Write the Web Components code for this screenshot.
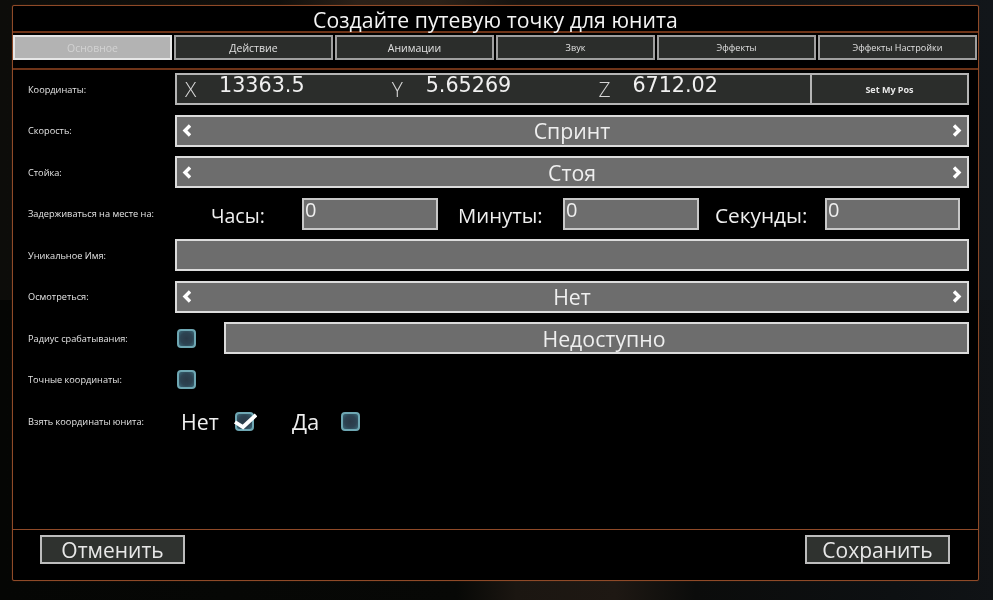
<!DOCTYPE html>
<html lang="ru"><head><meta charset="utf-8"><title>Путевая точка</title>
<style>
html,body{margin:0;height:100%}
body{width:993px;height:600px;overflow:hidden;box-sizing:border-box;padding:5px 14px 19px 12px;background:linear-gradient(90deg,#0d0d0a 0,#0f0e0b 28%,#2a2018 36%,#2b2118 44%,#14120f 52%,#101213 80%,#12161a 100%) top/100% 50% no-repeat,linear-gradient(90deg,#050604 0,#070806 46%,#1b1611 52%,#1e1813 62%,#0b0c0b 70%,#0d1012 90%,#101316 100%) bottom/100% 50% no-repeat;color:#fff;font-family:"Open Sans","Noto Sans",sans-serif}
wp-dialog{filter:blur(.3px)}
</style></head><body>
<template id="t-dialog"><style>
:host{display:flex;flex-direction:column;height:100%;box-sizing:border-box;background:#000;border:1px solid #8f4a28;box-shadow:0 0 1px #7d3c1c;border-radius:2px}
header{height:24px;padding-top:1px;flex:none;display:flex;align-items:center;justify-content:center;font-size:21.2px;letter-spacing:.06px;color:#f4f4f4;border-bottom:2px solid #6f3418}
nav{height:37px;flex:none;box-sizing:border-box;display:grid;grid-template-columns:repeat(6,159px);gap:2px;padding:2px 0 0 0;border-bottom:2px solid #6f3418;align-content:start}
main{flex:1;min-height:0;display:flex;flex-direction:column;gap:9.5px;padding:3px 9px 0 15px}
footer{height:51px;flex:none;box-sizing:border-box;border-top:1px solid #8f4a28;display:flex;justify-content:space-between;padding:5px 28px 0 27px}
</style><header><slot name="title"></slot></header><nav><slot name="tabs"></slot></nav><main><slot></slot></main><footer><slot name="footer"></slot></footer></template>

<template id="t-tab"><style>
:host{display:flex;align-items:center;justify-content:center;height:25px;box-sizing:border-box;border:2px solid #9f9f9f;background:#2b2d2b;color:#e0e0e0;font-size:10.5px}
:host([active]){background:#b3b3b3;border-color:#e6e6e6;color:#d2d2d2}
:host([small]){font-size:9.1px}
</style><slot></slot></template>

<template id="t-row"><style>
:host{display:grid;grid-template-columns:147px 1fr;align-items:center;height:32px}
.l{font-size:9.2px;color:#e4e4e4}
.c{display:flex;align-items:center;height:100%;min-width:0}
</style><div class="l"><slot name="label"></slot></div><div class="c"><slot></slot></div></template>

<template id="t-coords"><style>
:host{display:flex;flex:1;height:32px;box-sizing:border-box;border:2px solid #b5b5b5;background:#2b2d2b}
.v{flex:1;display:flex;position:relative}
button{all:unset;box-sizing:border-box;width:157px;border-left:2px solid #b5b5b5;display:flex;align-items:center;justify-content:center;font:700 9px "Open Sans",sans-serif;color:#e8e8e8}
</style><div class="v"><slot></slot></div><button>Set My Pos</button></template>

<template id="t-axis"><style>
:host{display:block;width:206.7px;box-sizing:border-box;padding-left:8px}
.w{display:flex;align-items:flex-start}
.a{font-size:21px;font-weight:300;color:#d6d6d6;width:34px;line-height:24px;margin-top:2px}
.n{font:20.7px/20px "DejaVu Sans",sans-serif;color:#f0f0f0;margin-top:0}
</style><div class="w"><span class="a"><slot name="axis"></slot></span><span class="n"><slot></slot></span></div></template>

<template id="t-select"><style>
:host{display:flex;flex:1;align-items:center;justify-content:space-between;height:32px;box-sizing:border-box;border:2px solid #dcdcdc;background:#6d6d6d;padding:0 5px 0 5px;font-size:21.3px;color:#efefef}
svg{width:9px;height:13px;flex:none}
path{fill:none;stroke:#fff;stroke-width:3.4}
span{flex:1;text-align:center}
</style><svg viewBox="0 0 9 13"><path d="M8 1.500 3 6.500l5 5"/></svg><span><slot></slot></span><svg viewBox="0 0 9 13"><path d="M1 1.500 6 6.500l-5 5"/></svg></template>

<template id="t-field"><style>
:host{display:flex;flex:1;align-items:center;justify-content:center;height:32px;box-sizing:border-box;border:2px solid #dcdcdc;background:#6d6d6d;font-size:21.3px;color:#efefef}
:host([offset]){padding-left:15px}
</style><slot></slot></template>

<template id="t-timefield"><style>
:host{display:block;width:136px;height:32px;box-sizing:border-box;border:2px solid #c8c8c8;background:#6d6d6d;padding-left:1px;font-size:20px;line-height:20px;color:#efefef}
</style><slot></slot></template>

<template id="t-check"><style>
:host{display:block;position:relative;width:19px;height:19px;flex:none;box-sizing:border-box;border:2px solid #6ea7b3;border-radius:4px;background:radial-gradient(circle,#2a3a48 0,#2d4352 55%,#3c6a7a 100%)}
svg{position:absolute;left:-4px;top:-3px;width:24px;height:20px;display:none}
:host([checked]) svg{display:block}
</style><svg viewBox="0 0 24 20"><path d="M2 11l8 5L23 4" fill="none" stroke="#fff" stroke-width="3.8"/></svg></template>

<template id="t-btn"><style>
:host{display:flex;align-items:center;justify-content:center;width:145px;height:29px;box-sizing:border-box;border:2px solid #bdbdbd;background:#2f322f;font-size:21px;color:#e8e8e8}
</style><slot></slot></template>

<template id="t-label"><style>
:host{display:block;padding-top:3px;box-sizing:border-box}
</style><slot></slot></template>

<script>
for(const [n,t] of [['wp-dialog','t-dialog'],['wp-tab','t-tab'],['wp-row','t-row'],['wp-coords','t-coords'],['wp-axis','t-axis'],['wp-select','t-select'],['wp-field','t-field'],['wp-time','t-timefield'],['wp-check','t-check'],['wp-btn','t-btn'],['wp-label','t-label']]){
 customElements.define(n,class extends HTMLElement{constructor(){super();this.attachShadow({mode:'open'}).append(document.getElementById(t).content.cloneNode(true))}});
}
</script>

<wp-dialog>
<span slot="title">Создайте путевую точку для юнита</span>
<wp-tab slot="tabs" active>Основное</wp-tab><wp-tab slot="tabs">Действие</wp-tab><wp-tab slot="tabs">Анимации</wp-tab><wp-tab slot="tabs" small>Звук</wp-tab><wp-tab slot="tabs" small>Эффекты</wp-tab><wp-tab slot="tabs" small>Эффекты Настройки</wp-tab>

<wp-row><span slot="label">Координаты:</span><wp-coords><wp-axis><span slot="axis">X</span>13363.5</wp-axis><wp-axis><span slot="axis">Y</span>5.65269</wp-axis><wp-axis><span slot="axis">Z</span>6712.02</wp-axis></wp-coords></wp-row>
<wp-row><span slot="label">Скорость:</span><wp-select>Спринт</wp-select></wp-row>
<wp-row><span slot="label">Стойка:</span><wp-select>Стоя</wp-select></wp-row>
<wp-row><span slot="label">Задерживаться на месте на:</span><span style="display:flex;align-items:center;flex:1;color:#efefef"><wp-label style="margin-left:36px;width:91px;font-size:19.5px">Часы:</wp-label><wp-time>0</wp-time><wp-label style="margin-left:20px;width:105px;font-size:20.3px">Минуты:</wp-label><wp-time>0</wp-time><wp-label style="margin-left:16px;width:110px;font-size:20.8px">Секунды:</wp-label><wp-time style="width:135px">0</wp-time></span></wp-row>
<wp-row><span slot="label">Уникальное Имя:</span><wp-field></wp-field></wp-row>
<wp-row><span slot="label">Осмотреться:</span><wp-select>Нет</wp-select></wp-row>
<wp-row><span slot="label">Радиус срабатывания:</span><span style="display:flex;align-items:center;flex:1"><wp-check style="margin:0 28px 0 2px"></wp-check><wp-field offset>Недоступно</wp-field></span></wp-row>
<wp-row><span slot="label">Точные координаты:</span><wp-check style="margin-left:2px"></wp-check></wp-row>
<wp-row><span slot="label">Взять координаты юнита:</span><span style="display:flex;align-items:center;font-size:21.3px;color:#efefef"><span style="margin-left:6px;width:54px">Нет</span><wp-check checked></wp-check><span style="margin-left:38px;width:49px;font-size:22px">Да</span><wp-check></wp-check></span></wp-row>

<wp-btn slot="footer">Отменить</wp-btn><wp-btn slot="footer">Сохранить</wp-btn>
</wp-dialog>
</body></html>
